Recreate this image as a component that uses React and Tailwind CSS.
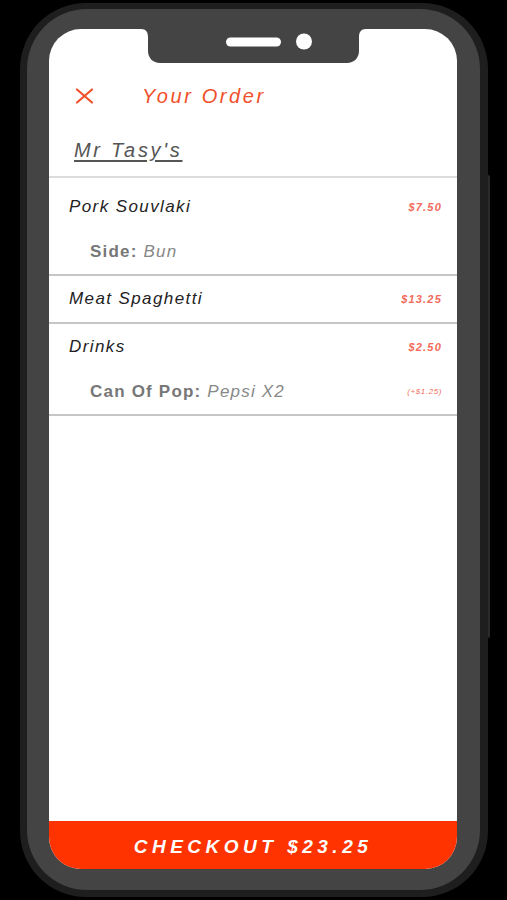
import { Fragment } from 'react'

const items = [
  { name: 'Pork Souvlaki', price: '$7.50', option: { label: 'Side:', value: 'Bun' } },
  { name: 'Meat Spaghetti', price: '$13.25' },
  { name: 'Drinks', price: '$2.50', option: { label: 'Can Of Pop:', value: 'Pepsi X2', extra: '(+$1.25)' } },
]

function CloseIcon() {
  return (
    <svg width="19" height="16" viewBox="0 0 19 16" fill="none">
      <path d="M2 1.5L17 14.5M17 1.5L2 14.5" stroke="#f0502a" strokeWidth="2.2" strokeLinecap="round" />
    </svg>
  )
}

function Notch() {
  return (
    <svg className="absolute left-[92px] top-0" width="225" height="34" viewBox="0 0 225 34">
      <path d="M0 0 H225 C220 0 218 3 218 8 V22 C218 29 213 34 206 34 H19 C12 34 7 29 7 22 V8 C7 3 5 0 0 0 Z" fill="#444" />
      <rect x="85" y="8.5" width="55" height="9" rx="4.5" fill="#fff" />
      <circle cx="163" cy="12.5" r="8" fill="#fff" />
    </svg>
  )
}

export default function App() {
  return (
    <div className="h-[900px] w-[507px] bg-black pl-[20px] pt-[3px]" style={{ fontFamily: '"Liberation Sans", Arial, sans-serif' }}>
      <div className="relative h-[894px] w-[468px] rounded-[66px] bg-[#1e1e1e] pb-[7px] pl-[7px] pr-[8px] pt-[6px]">
        <div className="absolute left-[468px] top-[172px] h-[463px] w-[2px] rounded-r bg-[#2a2a2a]" />
        <div className="h-full w-full rounded-[60px] bg-[#444] pb-[21px] pl-[22px] pr-[23px] pt-[20px]">
          <div className="relative flex h-full w-full flex-col overflow-hidden rounded-[32px] bg-white">
            <Notch />

            <div className="mt-[44px] flex h-[46px] items-center pl-[26px]">
              <CloseIcon />
              <span className="ml-[48px] text-[20px] italic tracking-[2.6px] text-[#f0502a]">Your Order</span>
            </div>

            <div className="mt-[8px] flex h-[46px] items-center pl-[25px]">
              <span className="text-[20px] italic tracking-[2.7px] text-[#555] underline underline-offset-[3px]">Mr Tasy's</span>
            </div>

            <div className="mt-[3px] h-[2px] bg-[#dcdcdc]" />

            <div className="pt-[6px]">
              {items.map((item) => (
                <Fragment key={item.name}>
                  <div className="flex h-[46px] items-center justify-between pl-[20px] pr-[15px]">
                    <span className="text-[17px] italic tracking-[1.4px] text-[#222]">{item.name}</span>
                    <span className="text-[11px] font-bold italic tracking-[1.2px] text-[#f26b5b]">{item.price}</span>
                  </div>
                  {item.option ? (
                    <div className="flex h-[44px] items-center justify-between pl-[41px] pr-[15px]">
                      <span className="text-[17px] tracking-[1.2px]">
                        <span className="font-bold text-[#777]">{item.option.label}</span>{' '}
                        <span className="italic text-[#888]">{item.option.value}</span>
                      </span>
                      {item.option.extra ? (
                        <span className="text-[8px] italic tracking-[0.6px] text-[#f26b5b]">{item.option.extra}</span>
                      ) : null}
                    </div>
                  ) : null}
                  <div className="h-[2px] bg-[#c6c6c6]" />
                </Fragment>
              ))}
            </div>

            <div className="flex-1" />

            <button
              type="button"
              className="flex h-[48px] w-full items-center justify-center bg-[#ff3300] pt-[5px] text-[19px] font-bold italic tracking-[4.5px] text-white"
            >
              CHECKOUT $23.25
            </button>
          </div>
        </div>
      </div>
    </div>
  )
}
